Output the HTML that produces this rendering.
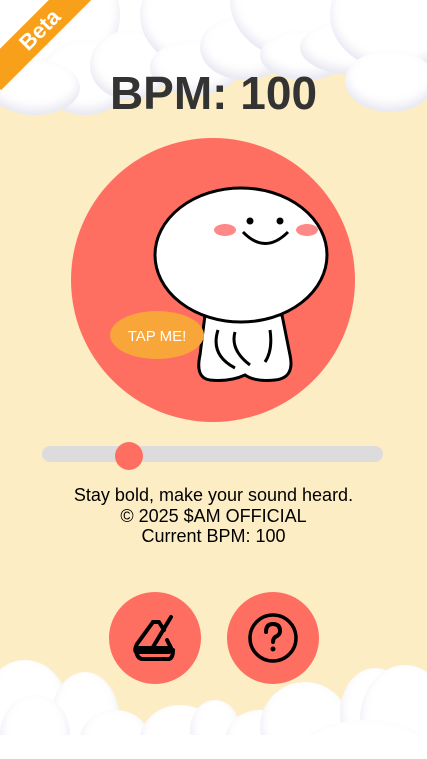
<!DOCTYPE html>
<html style="overflow:hidden;background:#fdedc4"><head><style>
body{margin:0;width:427px;height:759px;overflow:hidden;background:#fdedc4;font-family:"Liberation Sans",sans-serif;position:relative}
.c{position:absolute;border-radius:50%;background:#fff;box-shadow:inset 0 -6px 10px rgba(200,200,225,.45)}
h1{position:absolute;top:66px;left:0;width:427px;text-align:center;margin:0;font-size:46px;font-weight:bold;color:#333}
.txt{position:absolute;top:485px;width:427px;text-align:center;font-size:18px;line-height:20.5px;color:#000}
.btn{position:absolute;width:92px;height:92px;border-radius:50%;background:#ff6f61;top:592px}
</style></head><body>
<div style="position:absolute;left:0;top:0;width:427px;height:40px;background:#fff"></div>
<div class="c" style="left:-30px;top:-50px;width:150px;height:130px"></div>
<div class="c" style="left:40px;top:40px;width:90px;height:75px"></div>
<div class="c" style="left:-10px;top:60px;width:90px;height:55px"></div>
<div class="c" style="left:90px;top:30px;width:80px;height:70px"></div>
<div class="c" style="left:140px;top:-40px;width:130px;height:110px"></div>
<div class="c" style="left:150px;top:40px;width:90px;height:55px"></div>
<div class="c" style="left:200px;top:15px;width:90px;height:65px"></div>
<div class="c" style="left:230px;top:-60px;width:140px;height:120px"></div>
<div class="c" style="left:260px;top:30px;width:90px;height:50px"></div>
<div class="c" style="left:300px;top:20px;width:110px;height:55px"></div>
<div class="c" style="left:330px;top:-40px;width:130px;height:110px"></div>
<div class="c" style="left:345px;top:50px;width:90px;height:62px"></div>
<div style="position:absolute;left:-30px;top:15px;width:140px;height:30px;background:#f9a01b;transform:rotate(-45deg);color:#fff;font-weight:bold;font-size:22px;text-align:center;line-height:30px">Beta</div>
<h1>BPM: 100</h1>
<div style="position:absolute;left:71px;top:138px;width:284px;height:284px;border-radius:50%;background:#ff6f61"></div>
<svg style="position:absolute;left:70px;top:140px" width="290" height="290" viewBox="0 0 290 290">
<path d="M135 175 L130 215 Q125 238 140 240 Q160 242 175 235 Q185 242 205 240 Q225 238 220 215 L212 175Z" fill="#fff" stroke="#000" stroke-width="3"/>
<path d="M148 190 Q140 215 165 228 M165 192 Q160 210 180 225 M200 190 Q203 210 195 222" fill="none" stroke="#000" stroke-width="3"/>
<ellipse cx="171" cy="115" rx="86" ry="67" fill="#fff" stroke="#000" stroke-width="3"/>
<ellipse cx="155" cy="90" rx="11" ry="6" fill="#f88"/>
<ellipse cx="237" cy="90" rx="11" ry="6" fill="#f88"/>
<circle cx="180" cy="81" r="3.5"/><circle cx="210" cy="81" r="3.5"/>
<path d="M173 92 Q195 115 218 92" fill="none" stroke="#000" stroke-width="3"/>
<ellipse cx="87" cy="195" rx="47" ry="24" fill="#f8a53a"/>
<text x="87" y="201" text-anchor="middle" font-family="Liberation Sans" font-size="15" fill="#fff">TAP ME!</text>
</svg>
<div style="position:absolute;left:42px;top:446px;width:341px;height:16px;border-radius:8px;background:#dcdcdc"></div>
<div style="position:absolute;left:115px;top:442px;width:28px;height:28px;border-radius:50%;background:#ff6f61"></div>
<div class="txt">Stay bold, make your sound heard.<br>© 2025 $AM OFFICIAL<br>Current BPM: 100</div>
<div class="btn" style="left:109px"><svg width="92" height="92" viewBox="0 0 92 92"><g fill="none" stroke="#000" stroke-width="4" stroke-linecap="round" stroke-linejoin="round"><path d="M44 30 L28 52 Q25 58 27 60 L60 60 Q64 58 60 52 L58 48"/><path d="M44 30 L50 30 L55 38"/><path d="M27 58 Q28 67 34 67 L60 67 Q64 66 64 58"/><path d="M28 56 L62 56"/><path d="M44 55 L62 25"/></g></svg></div>
<div class="btn" style="left:227px"><svg width="92" height="92" viewBox="0 0 92 92"><circle cx="46" cy="46" r="23" fill="none" stroke="#000" stroke-width="3.5"/><path d="M39 40 Q39 32 46 32 Q53 32 53 39 Q53 43 48 45 Q46 47 46 50" fill="none" stroke="#000" stroke-width="4" stroke-linecap="round"/><circle cx="46" cy="57" r="2.5"/></svg></div>
<div class="c" style="left:-20px;top:660px;width:90px;height:110px"></div>
<div class="c" style="left:50px;top:672px;width:70px;height:100px"></div>
<div class="c" style="left:0px;top:695px;width:70px;height:80px"></div>
<div class="c" style="left:80px;top:710px;width:70px;height:60px"></div>
<div class="c" style="left:140px;top:705px;width:80px;height:70px"></div>
<div class="c" style="left:190px;top:700px;width:50px;height:60px"></div>
<div class="c" style="left:225px;top:710px;width:70px;height:60px"></div>
<div class="c" style="left:260px;top:682px;width:90px;height:90px"></div>
<div class="c" style="left:340px;top:668px;width:70px;height:90px"></div>
<div class="c" style="left:360px;top:665px;width:90px;height:110px"></div>
<div class="c" style="left:300px;top:720px;width:130px;height:60px"></div>
<div style="position:absolute;left:0px;top:735px;width:427px;height:60px;background:#fff"></div>
</body></html>
